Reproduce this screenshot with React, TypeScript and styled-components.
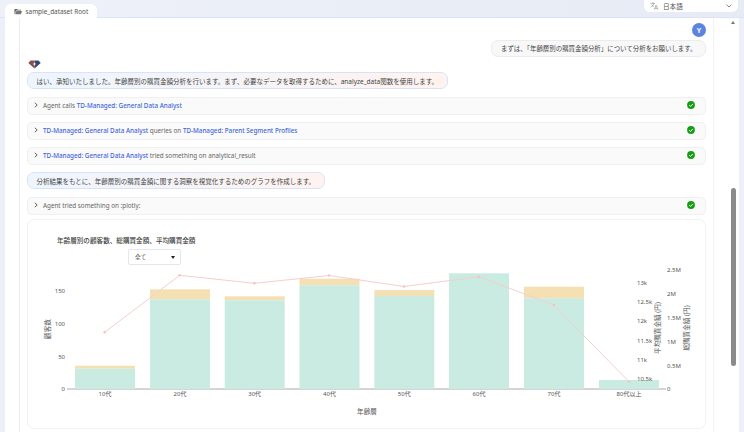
import React from "react";
import styled, { createGlobalStyle } from "styled-components";

const GlobalStyle = createGlobalStyle`
  html, body {
    margin: 0;
    padding: 0;
    background: #edf0f8;
    overflow: hidden;
  }
  * {
    box-sizing: border-box;
  }
`;

const FONT = `"Noto Sans", "Noto Sans CJK JP", sans-serif`;

const Page = styled.div`
  width: 744px;
  height: 432px;
  display: flex;
  flex-direction: column;
  overflow: hidden;
  background: #edf0f8;
  font-family: ${FONT};
  color: #444;
`;

const TopBar = styled.div`
  height: 18px;
  flex: none;
  display: flex;
  justify-content: space-between;
  align-items: flex-start;
  padding: 0 6px 0 5px;
  background: linear-gradient(90deg, #eef1f8, #e6ebf5);
  box-shadow: inset 0 -1px 0 #dbe3f4;
`;

const Tab = styled.div`
  width: 92px;
  height: 18px;
  margin-top: 4px;
  padding: 3px 0 0 9px;
  display: flex;
  align-items: flex-start;
  gap: 3.5px;
  background: #fff;
  border-radius: 6px 6px 0 0;
  font-size: 6.4px;
  line-height: 9px;
  color: #555;
  white-space: nowrap;
`;

const LangSelect = styled.div`
  width: 94px;
  height: 12px;
  display: flex;
  align-items: center;
  padding: 0 6px 0 6px;
  background: #fff;
  border-radius: 0 0 6px 6px;
  font-size: 6.6px;
  color: #555;
`;

const LangLabel = styled.span`
  margin-left: 4px;
  flex: 1;
`;

const Body = styled.div`
  flex: 1;
  min-height: 0;
  display: flex;
  margin: 0 5px;
  background: #fff;
`;

const ChatColumn = styled.div`
  width: 695px;
  flex: none;
  margin-left: 14px;
  padding: 5px 7px 0;
  border-left: 1px solid #eaecf1;
  border-right: 1px solid #f2f3f6;
  display: flex;
  flex-direction: column;
  overflow: hidden;
`;

const ScrollGutter = styled.div`
  flex: 1;
  position: relative;
  background: #fff;
`;

const ScrollArrow = styled.div`
  position: absolute;
  top: 3px;
  left: 17px;
  width: 0;
  height: 0;
  border-left: 2.5px solid transparent;
  border-right: 2.5px solid transparent;
  border-bottom: 3px solid #777;
`;

const ScrollThumb = styled.div`
  position: absolute;
  top: 170px;
  left: 17px;
  width: 5px;
  height: 178px;
  border-radius: 2.5px;
  background: #8b8b8b;
`;

const UserBlock = styled.div`
  display: flex;
  flex-direction: column;
  align-items: flex-end;
  gap: 3px;
`;

const Avatar = styled.div`
  width: 14px;
  height: 14px;
  border-radius: 50%;
  background: #5b84e0;
  color: #fff;
  font-size: 7px;
  font-weight: 700;
  display: flex;
  align-items: center;
  justify-content: center;
`;

const UserBubble = styled.div`
  height: 17px;
  padding: 0 8.5px;
  display: flex;
  align-items: center;
  background: #f8f8f9;
  border: 1px solid #ebecef;
  border-radius: 7px;
  font-size: 6.45px;
  white-space: nowrap;
`;

const AgentLogo = styled.svg`
  width: 13px;
  height: 9px;
  margin: 3px 0 3px 1px;
  flex: none;
  display: block;
`;

const AgentBubble = styled.div<{ $gap?: number }>`
  align-self: flex-start;
  height: 17px;
  margin-top: ${(p) => p.$gap ?? 0}px;
  padding: 0 9px 0 8.5px;
  display: flex;
  align-items: center;
  background: linear-gradient(90deg, #eef5ff, #fff3ef) padding-box;
  border: 1px solid #d8e2f8;
  border-radius: 7px;
  font-size: 6.5px;
  white-space: nowrap;
`;

const StepRow = styled.div<{ $gap: number }>`
  height: 18px;
  flex: none;
  margin-top: ${(p) => p.$gap}px;
  padding: 0 10.5px 1.5px 4.5px;
  display: flex;
  align-items: center;
  background: #fafafa;
  border: 1px solid #f0f0f0;
  border-radius: 5px;
  font-size: 6.3px;
  color: #666;
  white-space: pre;
`;

const StepText = styled.span`
  margin-left: 4.5px;
  flex: 1;
`;

const AgentLink = styled.span`
  color: #3f67d8;
  font-weight: 500;
`;

const ChartCard = styled.div`
  position: relative;
  flex: none;
  height: 210px;
  margin-top: 4px;
  background: #fff;
  border: 1px solid #f2f2f4;
  border-radius: 7px;
`;

const ChartSvg = styled.svg`
  display: block;
  width: 679px;
  height: 210px;
  margin: -1px;
`;

const FilterSelect = styled.div`
  position: absolute;
  top: 29px;
  left: 100px;
  width: 53px;
  height: 16px;
  padding: 0 4px 0 6px;
  display: flex;
  align-items: center;
  justify-content: space-between;
  background: #fff;
  border: 1px solid #e3e6ee;
  border-radius: 2px;
  font-size: 5.6px;
  color: #555;
`;

const FilterCaret = styled.div`
  width: 0;
  height: 0;
  margin-right: 1px;
  border-left: 2px solid transparent;
  border-right: 2px solid transparent;
  border-top: 3px solid #222;
`;

const AxisText = styled.text`
  font-family: ${FONT};
  font-size: 6px;
  fill: #555;
`;

const AxisTitle = styled.text`
  font-family: ${FONT};
  font-size: 6.6px;
  fill: #555;
  text-anchor: middle;
`;

const TitleText = styled.text`
  font-family: ${FONT};
  font-size: 6.6px;
  font-weight: 500;
  fill: #444;
`;

const Chevron = () => (
  <svg width="6" height="6" viewBox="0 0 6 6" fill="none">
    <path d="M1.8 0.8 L4.2 3 L1.8 5.2" stroke="#555" strokeWidth="0.9" />
  </svg>
);

const DoneIcon = () => (
  <svg width="8" height="8" viewBox="0 0 8 8">
    <circle cx="4" cy="4" r="3.9" fill="#12a012" />
    <path d="M2.1 4.1 L3.5 5.4 L5.9 2.9" fill="none" stroke="#fff" strokeWidth="1" />
  </svg>
);

const FolderIcon = () => (
  <svg width="8" height="7" viewBox="0 0 8 7" style={{ marginTop: 1 }}>
    <path d="M0.5 1 H3 L3.8 1.8 H7 V2.6 H2 L1 6 H0.5 Z" fill="#666" />
    <path d="M2.3 3 H8 L6.9 6.3 H1.2 Z" fill="#777" />
  </svg>
);

const TranslateIcon = () => (
  <svg width="9" height="8" viewBox="0 0 9 8" fill="none" stroke="#888" strokeWidth="0.6">
    <path d="M0.5 1.4 H5 M2.7 0.3 V1.4 M4 1.4 C3.6 3 2.2 4.4 0.6 5 M1.6 2.6 C2.2 3.6 3 4.2 4 4.6" />
    <path d="M4.2 7.7 L6.1 3.2 L8 7.7 M4.8 6.4 H7.4" />
  </svg>
);

const LangChevron = () => (
  <svg width="6" height="4" viewBox="0 0 6 4" fill="none">
    <path d="M0.6 0.8 L3 3 L5.4 0.8" stroke="#666" strokeWidth="0.8" />
  </svg>
);

// chart values are in page coordinates minus (28, 220)
const BASE_Y = 169;

const bars = [
  { label: "10代", x: 47, tan: 145.7, green: 148.7 },
  { label: "20代", x: 122, tan: 69.3, green: 79.3 },
  { label: "30代", x: 196.7, tan: 76.3, green: 80.3 },
  { label: "40代", x: 271.5, tan: 58.7, green: 65.3 },
  { label: "50代", x: 346.3, tan: 70, green: 76 },
  { label: "60代", x: 421, tan: 53.3, green: 53.3 },
  { label: "70代", x: 496, tan: 66.7, green: 78.3 },
  { label: "80代以上", x: 571, tan: 160, green: 160 },
];

const linePoints = [
  [76.7, 112.3],
  [151.7, 55.3],
  [226.4, 63.3],
  [301, 55.5],
  [376, 66.5],
  [451, 56.7],
  [525.7, 85],
  [601, 161.7],
];

const leftTicks = [
  { label: "0", y: 169 },
  { label: "50", y: 136.3 },
  { label: "100", y: 103.5 },
  { label: "150", y: 71 },
];

const avgTicks = [
  { label: "13k", y: 62.7 },
  { label: "12.5k", y: 82 },
  { label: "12k", y: 101 },
  { label: "11.5k", y: 120.3 },
  { label: "11k", y: 139.7 },
  { label: "10.5k", y: 159 },
];

const totalTicks = [
  { label: "2.5M", y: 50 },
  { label: "2M", y: 74 },
  { label: "1.5M", y: 98 },
  { label: "1M", y: 121.5 },
  { label: "0.5M", y: 145.5 },
  { label: "0", y: 169 },
];

const SalesChart = () => (
  <ChartSvg viewBox="-1 -1 679 210">
    <TitleText x="29" y="22.5">年齢層別の顧客数、総購買金額、平均購買金額</TitleText>
    <line x1="39" x2="638" y1={BASE_Y} y2={BASE_Y} stroke="#aaa" strokeWidth="1" />
    {bars.map((b) => (
      <g key={b.label}>
        <rect x={b.x} y={b.tan} width="60" height={b.green - b.tan} fill="#f5e0b4" />
        <rect x={b.x} y={b.green} width="60" height={BASE_Y - b.green} fill="#caebe2" />
        <AxisText x={b.x + 30} y="175.5" textAnchor="middle">{b.label}</AxisText>
      </g>
    ))}
    <polyline
      points={linePoints.map((p) => p.join(",")).join(" ")}
      fill="none"
      stroke="#f5cfcd"
      strokeWidth="1"
    />
    {linePoints.map(([x, y]) => (
      <circle key={x} cx={x} cy={y} r="1.3" fill="#f5c4c2" />
    ))}
    {leftTicks.map((t) => (
      <AxisText key={t.label} x="37" y={t.y + 2.2} textAnchor="end">{t.label}</AxisText>
    ))}
    {avgTicks.map((t) => (
      <AxisText key={t.label} x="609" y={t.y + 2.2}>{t.label}</AxisText>
    ))}
    {totalTicks.map((t) => (
      <AxisText key={t.label} x="639" y={t.y + 2.2}>{t.label}</AxisText>
    ))}
    <AxisTitle x="339" y="193.5">年齢層</AxisTitle>
    <AxisTitle transform="translate(21.5 109) rotate(-90)">顧客数</AxisTitle>
    <AxisTitle transform="translate(632 108) rotate(-90)">平均購買金額 (円)</AxisTitle>
    <AxisTitle transform="translate(661 108) rotate(-90)">総購買金額 (円)</AxisTitle>
  </ChartSvg>
);

const App = () => {
  return (
    <Page>
      <GlobalStyle />
      <TopBar>
        <Tab>
          <FolderIcon />
          sample_dataset Root
        </Tab>
        <LangSelect>
          <TranslateIcon />
          <LangLabel>日本語</LangLabel>
          <LangChevron />
        </LangSelect>
      </TopBar>
      <Body>
        <ChatColumn>
          <UserBlock>
            <Avatar>Y</Avatar>
            <UserBubble>まずは、「年齢層別の購買金額分析」について分析をお願いします。</UserBubble>
          </UserBlock>
          <AgentLogo viewBox="0 0 13 9">
            <path d="M2.5 0.5 H6.5 V8.6 L0.3 3 Z" fill="#8a4f4c" />
            <path d="M6.5 0.5 H10.5 L12.7 3 L6.5 8.6 Z" fill="#34466f" />
            <path d="M6.5 2 L7 3.6 L8.4 4 L7 4.4 L6.5 6 L6 4.4 L4.6 4 L6 3.6 Z" fill="#fff" />
          </AgentLogo>
          <AgentBubble>はい、承知いたしました。年齢層別の購買金額分析を行います。まず、必要なデータを取得するために、analyze_data関数を使用します。</AgentBubble>
          <StepRow $gap={8}>
            <Chevron />
            <StepText>Agent calls <AgentLink>TD-Managed: General Data Analyst</AgentLink></StepText>
            <DoneIcon />
          </StepRow>
          <StepRow $gap={7}>
            <Chevron />
            <StepText><AgentLink>TD-Managed: General Data Analyst</AgentLink> queries on <AgentLink>TD-Managed: Parent Segment Profiles</AgentLink></StepText>
            <DoneIcon />
          </StepRow>
          <StepRow $gap={7}>
            <Chevron />
            <StepText><AgentLink>TD-Managed: General Data Analyst</AgentLink> tried something on analytical_result</StepText>
            <DoneIcon />
          </StepRow>
          <AgentBubble $gap={7}>分析結果をもとに、年齢層別の購買金額に関する洞察を視覚化するためのグラフを作成します。</AgentBubble>
          <StepRow $gap={8}>
            <Chevron />
            <StepText>Agent tried something on :plotly:</StepText>
            <DoneIcon />
          </StepRow>
          <ChartCard>
            <SalesChart />
            <FilterSelect>
              全て
              <FilterCaret />
            </FilterSelect>
          </ChartCard>
        </ChatColumn>
        <ScrollGutter>
          <ScrollArrow />
          <ScrollThumb />
        </ScrollGutter>
      </Body>
    </Page>
  );
};

export default App;
